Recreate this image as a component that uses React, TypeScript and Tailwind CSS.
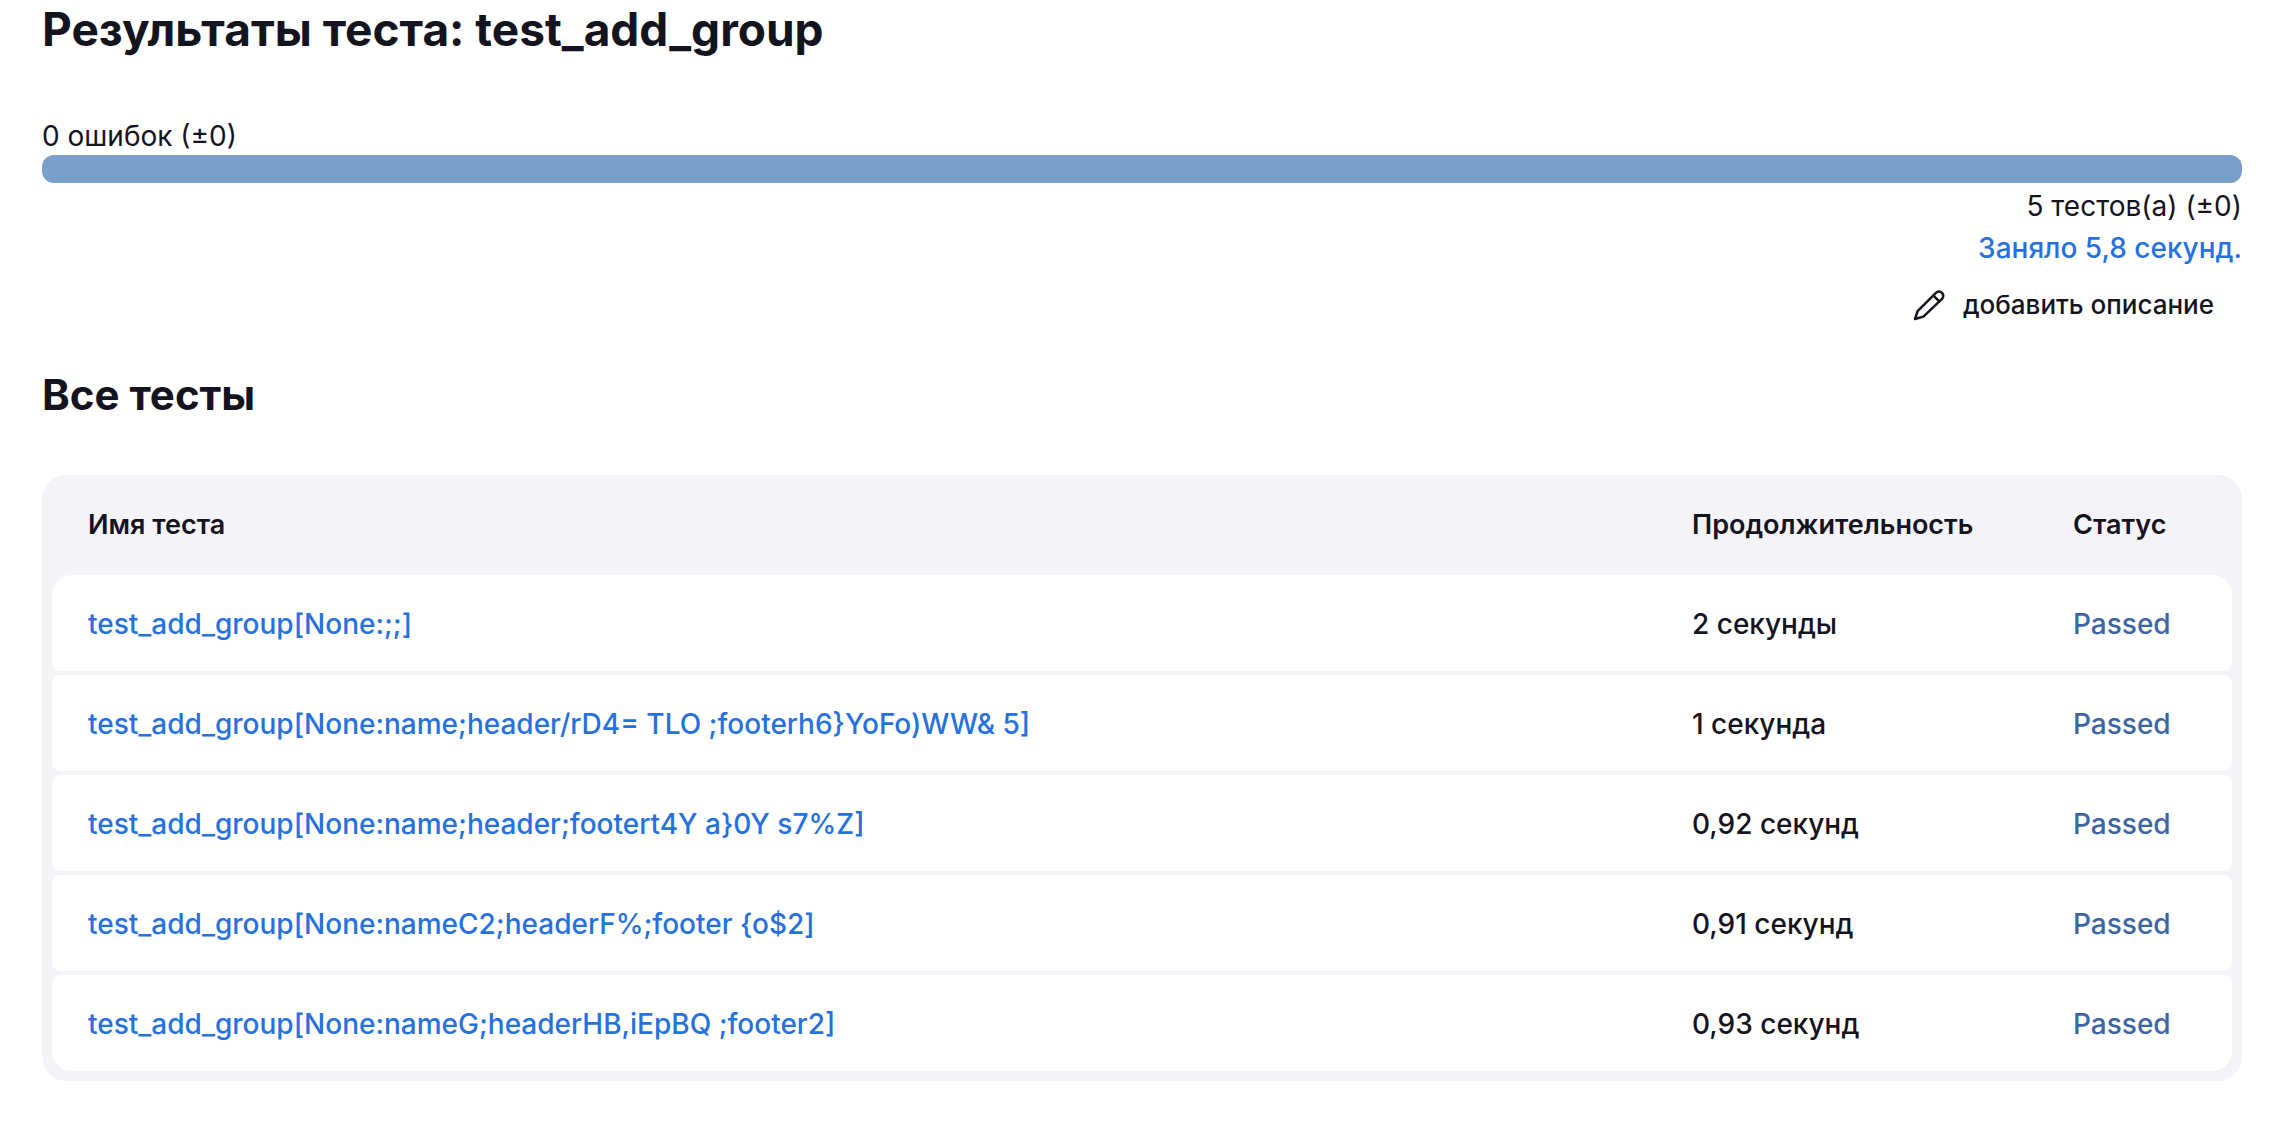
type TestRow = { name: string; duration: string; status: string };

const tests: TestRow[] = [
  { name: 'test_add_group[None:;;]', duration: '2 секунды', status: 'Passed' },
  { name: 'test_add_group[None:name;header/rD4= TLO ;footerh6}YoFo)WW& 5]', duration: '1 секунда', status: 'Passed' },
  { name: 'test_add_group[None:name;header;footert4Y a}0Y s7%Z]', duration: '0,92 секунд', status: 'Passed' },
  { name: 'test_add_group[None:nameC2;headerF%;footer {o$2]', duration: '0,91 секунд', status: 'Passed' },
  { name: 'test_add_group[None:nameG;headerHB,iEpBQ ;footer2]', duration: '0,93 секунд', status: 'Passed' },
];

function PencilIcon() {
  return (
    <svg
      aria-hidden="true"
      viewBox="0 0 32 32"
      className="size-8"
      fill="none"
      stroke="currentColor"
      strokeWidth="2.5"
      strokeLinecap="round"
      strokeLinejoin="round"
    >
      <path d="M2 30 4.6 22.2 22.9 3.8a4.3 4.3 0 0 1 6.1 0 4.3 4.3 0 0 1 0 6.1L10.4 27.6Z" />
      <path d="m20.4 6.6 5.9 5.8" />
    </svg>
  );
}

function TestsTable() {
  return (
    <div className="rounded-3xl bg-[#f3f3f8] px-[10px] pb-[6px]">
      <table className="w-full border-separate border-spacing-x-0 border-spacing-y-1 text-left">
        <thead>
          <tr className="h-[92px] text-[27px]">
            <th scope="col" className="pl-9 font-semibold">Имя теста</th>
            <th scope="col" className="w-[381px] pl-9 font-semibold">Продолжительность</th>
            <th scope="col" className="w-[195px] pl-9 font-semibold">Статус</th>
          </tr>
        </thead>
        <tbody>
          {tests.map((t) => (
            <tr
              key={t.name}
              className="h-24 [&>td]:bg-white [&>td]:pt-0.5 [&>td]:pl-9 [&>td:first-child]:rounded-l-lg [&>td:last-child]:rounded-r-lg first:[&>td:first-child]:rounded-tl-[20px] first:[&>td:last-child]:rounded-tr-[20px] last:[&>td:first-child]:rounded-bl-[20px] last:[&>td:last-child]:rounded-br-[20px]"
            >
              <td>
                <a href="#" className="font-medium text-[#2671e0]">{t.name}</a>
              </td>
              <td className="font-medium">{t.duration}</td>
              <td className="font-medium text-[#3d65a5]">{t.status}</td>
            </tr>
          ))}
        </tbody>
      </table>
    </div>
  );
}

export default function App() {
  return (
    <main className="min-h-screen bg-white pr-[30px] pl-[42px] font-['Inter',sans-serif] text-[28px] leading-[42px] text-[#14141f]">
      <h1 className="text-[46px] leading-[58px] font-bold">Результаты теста: test_add_group</h1>

      <section className="pt-[59px]">
        <div className="leading-[38px]">0 ошибок (±0)</div>
        <div className="h-7 rounded-xl bg-[#7a9fcb]" />
        <div className="flex flex-col items-end pt-0.5">
          <div>5 тестов(а) (±0)</div>
          <a href="#" className="font-medium text-[#2671e0]">Заняло 5,8 секунд.</a>
          <button type="button" className="mt-[14px] flex items-center gap-[18px] pr-7 text-[26px] leading-[44px] font-medium">
            <PencilIcon />
            добавить описание
          </button>
        </div>
      </section>

      <h2 className="pt-10 pb-[52px] text-[42px] leading-[56px] font-bold">Все тесты</h2>
      <TestsTable />
    </main>
  );
}
